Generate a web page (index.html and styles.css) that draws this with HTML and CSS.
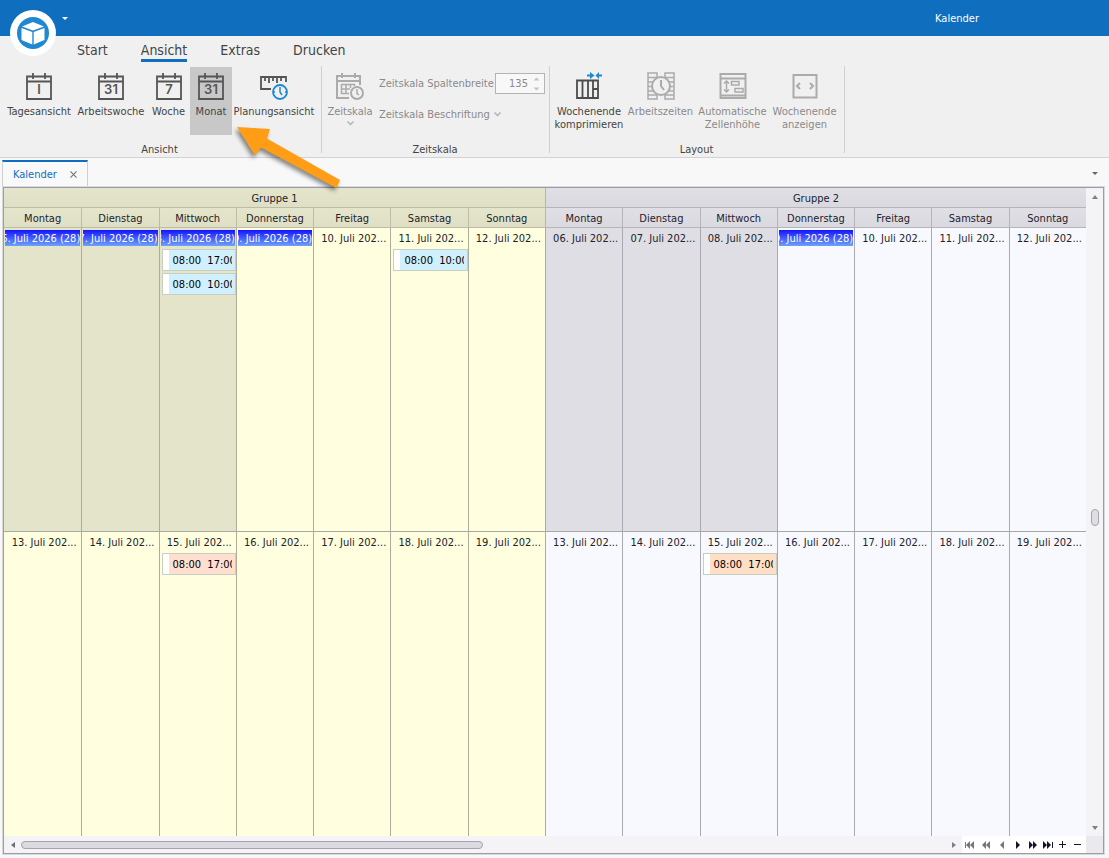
FILE: index.html
```html
<!DOCTYPE html>
<html lang="de">
<head>
<meta charset="utf-8">
<title>Kalender</title>
<link rel="stylesheet" href="styles.css">
</head>
<body>
<svg class="defs" aria-hidden="true">
  <symbol id="cal" viewBox="0 0 28 28"><path d="M2 4.500H26V27H2ZM2 9.500H26M8 1V7M20 1V7" fill="none" stroke="currentColor" stroke-width="1.800"/></symbol>
</svg>
<header class="titlebar">
  <button class="logo" aria-label="Anwendungsmenü">
    <svg width="46" height="46" viewBox="0 0 46 46"><circle cx="23" cy="23" r="23" fill="#fff"/><circle cx="23" cy="23" r="16" fill="#1e88d2"/><path d="M23 12L34 16.500L23 20.500L12 16.500ZM11.500 18L22.300 22V34.500L11.500 30ZM34.500 18L23.700 22V34.500L34.500 30Z" fill="#fff"/></svg>
  </button>
  <button class="quick" aria-label="Schnellzugriff anpassen"><svg width="6" height="3"><path d="M0 0H6L3 3Z" fill="#fff"/></svg></button>
  <span class="title">Kalender</span>
</header>
<nav class="tabs">
  <a href="#start">Start</a><a href="#ansicht" class="active">Ansicht</a><a href="#extras">Extras</a><a href="#drucken">Drucken</a>
</nav>
<section class="ribbon">
  <div class="group">
    <div class="tools views">
      <button class="tool"><svg width="28" height="28"><use href="#cal"/><text class="num" x="14" y="22">I</text></svg><span>Tagesansicht</span></button>
      <button class="tool"><svg width="28" height="28"><use href="#cal"/><text class="num" x="14" y="22">31</text></svg><span>Arbeitswoche</span></button>
      <button class="tool"><svg width="28" height="28"><use href="#cal"/><text class="num" x="14" y="22">7</text></svg><span>Woche</span></button>
      <button class="tool pressed"><svg width="28" height="28"><use href="#cal"/><text class="num" x="14" y="22">31</text></svg><span>Monat</span></button>
      <button class="tool"><svg width="28" height="28" viewBox="0 0 28 28" fill="none" stroke="#555" stroke-width="1.800"><path d="M11 17H1V5H26V10M5 5V9M9 5V11M13 5V9M17 5V11M21 5V9"/><circle cx="20" cy="20" r="7" stroke="#1e88d2"/><path d="M20 15V20L22 23M15 20H14M26 20H25" stroke="#1e88d2" stroke-width="1.500"/></svg><span>Planungsansicht</span></button>
    </div>
    <div class="caption">Ansicht</div>
  </div>
  <div class="group">
    <div class="tools scale">
      <button class="tool" disabled><svg width="28" height="28" viewBox="0 0 28 28" fill="none" stroke="#ababab" stroke-width="2"><path d="M13 26H1V4H24V13M1 9H24M6 1V6M19 1V6"/><path d="M13 21.500H5.500V12.500H18.500V14M5.500 17H14M10 12.500V21.500M14.500 12.500V16" stroke-width="1.500"/><circle cx="21" cy="21" r="6"/><path d="M21 17V21.500L23 23" stroke-width="1.500"/></svg><span>Zeitskala</span><svg class="chev" width="7" height="5" viewBox="0 0 7 5"><path d="M.5 .5L3.500 3.500L6.500 .5"/></svg></button>
      <div class="settings">
        <div class="field"><label for="breite">Zeitskala Spaltenbreite</label><span class="spin"><input id="breite" type="text" value="135" disabled><svg width="7" height="14" viewBox="0 0 7 14"><path d="M0.500 3.500L3.500 .5L6.500 3.500ZM.5 10.500L3.500 13.500L6.500 10.500Z" fill="#c4c4c4"/></svg></span></div>
        <button class="drop" disabled>Zeitskala Beschriftung <svg class="chev" width="7" height="5" viewBox="0 0 7 5"><path d="M.5 .5L3.500 3.500L6.500 .5"/></svg></button>
      </div>
    </div>
    <div class="caption">Zeitskala</div>
  </div>
  <div class="group">
    <div class="tools layout">
      <button class="tool"><svg width="28" height="28" viewBox="0 0 28 28" fill="none" stroke="#4c4c4c" stroke-width="1.800"><path d="M2 8.500H23V26H2ZM7.500 8V26M13 8V26M18 8V26M18 17H23"/><path d="M12 3.500H17M27 3.500H22" stroke="#1e88d2"/><path d="M15 0L19.500 3.500L15 7ZM24 0L20.500 3.500L24 7Z" fill="#1e88d2" stroke="none"/></svg><span>Wochenende<br>komprimieren</span></button>
      <button class="tool" disabled><svg width="28" height="28" viewBox="0 0 28 28" fill="none" stroke="#ababab" stroke-width="1.500"><path d="M1 1H10V27H1ZM18 1H27V27H18ZM1 5.500H10M1 10H10M1 14.500H10M1 19H10M1 23H10M18 5.500H27M18 10H27M18 14.500H27M18 19H27M18 23H27"/><circle cx="14" cy="14" r="9" fill="#f0f0f0" stroke-width="2"/><path d="M14 8V14L17 18" stroke-width="2"/></svg><span>Arbeitszeiten</span></button>
      <button class="tool" disabled><svg width="28" height="28" viewBox="0 0 28 28" fill="none" stroke="#ababab" stroke-width="2"><path d="M1.500 2H26.500V26H1.500ZM1.500 6.500H26.500M1.500 23.500H26.500"/><path d="M7.500 9V20M5 11.500L7.500 9L10 11.500M5 17.500L7.500 20L10 17.500M12.500 9.500H20V13H12.500ZM16 16.500H24V20H16Z" stroke-width="1.500"/></svg><span>Automatische<br>Zellenhöhe</span></button>
      <button class="tool" disabled><svg width="28" height="28" viewBox="0 0 28 28" fill="none" stroke="#ababab" stroke-width="2"><path d="M2.500 3H25.500V25.500H2.500Z"/><path d="M9 11L6 14L9 17M19 11L22 14L19 17"/></svg><span>Wochenende<br>anzeigen</span></button>
    </div>
    <div class="caption">Layout</div>
  </div>
</section>
<div class="doctabs">
  <div class="doctab"><a href="#kalender">Kalender</a><button aria-label="Schließen"><svg width="7" height="7" viewBox="0 0 8 8"><path d="M.5 .5L7.500 7.500M7.500 .5L.5 7.500" stroke="#777" stroke-width="1.300"/></svg></button></div>
  <button class="doclist" aria-label="Fensterliste"><svg width="6" height="3"><path d="M0 0H6L3 3Z" fill="#666"/></svg></button>
</div>
<main class="frame">
  <table class="month">
    <thead>
      <tr><th colspan="7" class="g1">Gruppe 1</th><th colspan="7" class="g2">Gruppe 2</th></tr>
      <tr class="days"><th class="g1">Montag</th><th class="g1">Dienstag</th><th class="g1">Mittwoch</th><th class="g1">Donnerstag</th><th class="g1">Freitag</th><th class="g1">Samstag</th><th class="g1">Sonntag</th><th class="g2">Montag</th><th class="g2">Dienstag</th><th class="g2">Mittwoch</th><th class="g2">Donnerstag</th><th class="g2">Freitag</th><th class="g2">Samstag</th><th class="g2">Sonntag</th></tr>
    </thead>
    <tbody>
      <tr class="first">
        <td class="y past"><div class="date sel"><span>06. Juli 2026 (28)</span></div></td>
        <td class="y past"><div class="date sel"><span>07. Juli 2026 (28)</span></div></td>
        <td class="y past"><div class="date sel"><span>08. Juli 2026 (28)</span></div><div class="event blue"><span>08:00&nbsp; 17:00</span></div><div class="event blue"><span>08:00&nbsp; 10:00</span></div></td>
        <td class="y"><div class="date sel"><span>09. Juli 2026 (28)</span></div></td>
        <td class="y"><div class="date">10. Juli 202...</div></td>
        <td class="y"><div class="date">11. Juli 202...</div><div class="event blue"><span>08:00&nbsp; 10:00</span></div></td>
        <td class="y"><div class="date">12. Juli 202...</div></td>
        <td class="b past"><div class="date">06. Juli 202...</div></td>
        <td class="b past"><div class="date">07. Juli 202...</div></td>
        <td class="b past"><div class="date">08. Juli 202...</div></td>
        <td class="b"><div class="date sel"><span>09. Juli 2026 (28)</span></div></td>
        <td class="b"><div class="date">10. Juli 202...</div></td>
        <td class="b"><div class="date">11. Juli 202...</div></td>
        <td class="b"><div class="date">12. Juli 202...</div></td>
      </tr>
      <tr>
        <td class="y"><div class="date">13. Juli 202...</div></td>
        <td class="y"><div class="date">14. Juli 202...</div></td>
        <td class="y"><div class="date">15. Juli 202...</div><div class="event red"><span>08:00&nbsp; 17:00</span></div></td>
        <td class="y"><div class="date">16. Juli 202...</div></td>
        <td class="y"><div class="date">17. Juli 202...</div></td>
        <td class="y"><div class="date">18. Juli 202...</div></td>
        <td class="y"><div class="date">19. Juli 202...</div></td>
        <td class="b"><div class="date">13. Juli 202...</div></td>
        <td class="b"><div class="date">14. Juli 202...</div></td>
        <td class="b"><div class="date">15. Juli 202...</div><div class="event orange"><span>08:00&nbsp; 17:00</span></div></td>
        <td class="b"><div class="date">16. Juli 202...</div></td>
        <td class="b"><div class="date">17. Juli 202...</div></td>
        <td class="b"><div class="date">18. Juli 202...</div></td>
        <td class="b"><div class="date">19. Juli 202...</div></td>
      </tr>
    </tbody>
  </table>
  <div class="vscroll">
    <button aria-label="Nach oben"><svg width="6" height="4"><path d="M0 4H6L3 0Z" fill="#7d7e8c"/></svg></button>
    <div class="vtrack"><div class="vthumb"></div></div>
    <button aria-label="Nach unten"><svg width="6" height="4"><path d="M0 0H6L3 4Z" fill="#7d7e8c"/></svg></button>
  </div>
  <div class="hscroll">
    <button class="end" aria-label="Nach links"><svg width="4" height="6"><path d="M4 0V6L0 3Z" fill="#6d6e7c"/></svg></button>
    <div class="htrack"><div class="hthumb"></div></div>
    <button class="end" aria-label="Nach rechts"><svg width="4" height="6"><path d="M0 0V6L4 3Z" fill="#7d7e8c"/></svg></button>
    <div class="navigator">
      <button class="dim" aria-label="Erster"><svg width="10" height="8"><path d="M0 1H1V7H0ZM5 0V8L1 4ZM9 0V8L5 4Z"/></svg></button>
      <button class="dim" aria-label="Vorherige Seite"><svg width="8" height="8"><path d="M4 0V8L0 4ZM8 0V8L4 4Z"/></svg></button>
      <button class="dim" aria-label="Zurück"><svg width="4" height="8"><path d="M4 0V8L0 4Z"/></svg></button>
      <button aria-label="Weiter"><svg width="4" height="8"><path d="M0 0V8L4 4Z"/></svg></button>
      <button aria-label="Nächste Seite"><svg width="8" height="8"><path d="M0 0V8L4 4ZM4 0V8L8 4Z"/></svg></button>
      <button aria-label="Letzter"><svg width="10" height="8"><path d="M0 0V8L4 4ZM4 0V8L8 4ZM9 1H10V7H9Z"/></svg></button>
      <button aria-label="Vergrößern"><svg width="7" height="7"><path d="M3 0H4V3H7V4H4V7H3V4H0V3H3Z"/></svg></button>
      <button aria-label="Verkleinern"><svg width="7" height="7"><path d="M0 3H7V4H0Z"/></svg></button>
    </div>
  </div>
  <div class="corner"></div>
</main>
<svg class="pointer" width="116" height="80" viewBox="0 0 116 80" aria-hidden="true"><path d="M2 2L35 4L32 13.500L105 55L101.500 63L26 22.500L20 30.500Z" fill="#ff9e16"/></svg>
</body>
</html>
```
FILE: styles.css
```css
* { box-sizing: border-box; }
html, body { height: 100%; }
body {
  margin: 0;
  display: flex;
  flex-direction: column;
  min-height: 500px;
  background: #f8f8f8;
  color: #444;
  font: 11px/13px "DejaVu Sans Condensed", "DejaVu Sans", sans-serif;
  font-stretch: condensed;
  overflow: hidden;
}
button { font: inherit; color: inherit; background: none; border: 0; padding: 0; }
svg { display: block; overflow: visible; }
a { color: inherit; text-decoration: none; }
.defs { position: absolute; width: 0; height: 0; }

.titlebar { position: relative; display: flex; align-items: center; height: 36px; padding: 0 130px 0 62px; background: #106ebe; color: #fff; flex: none; }
.logo { position: absolute; left: 10px; top: 10px; }
.title { margin-left: auto; }

.tabs { display: flex; gap: 33px; height: 30px; padding: 5px 0 0 77px; background: #f0f0f0; font-size: 14px; line-height: 19px; flex: none; }
.tabs a { height: 21px; }
.tabs .active { border-bottom: 3px solid #106ebe; }

.ribbon { display: flex; height: 92px; background: #f0f0f0; border-bottom: 1px solid #d2d2d2; flex: none; }
.group { display: flex; flex-direction: column; height: 87px; border-right: 1px solid #d0d0d0; padding: 1px 4px 0 3px; }
.group:first-child { padding-right: 5px; }
.tools { display: grid; height: 68px; flex: none; }
.views { grid-template-columns: 72px 72px 43px 42px 84px; }
.scale { grid-template-columns: 50px 170px; }
.layout { grid-template-columns: 72px 71px 73px 71px; }
.tool { display: flex; flex-direction: column; align-items: center; justify-content: flex-start; gap: 5px; padding-top: 5px; white-space: nowrap; }
.tool:disabled, .drop:disabled, .field { color: #8a8a8a; }
.tool .chev { margin-top: -2px; }
.pressed { background: #c8c8c8; }
.num { font: 600 13px Inter, sans-serif; text-anchor: middle; fill: #555; }
.tool use { color: #555; }
.chev { fill: none; stroke: #b4b4b4; stroke-width: 1.500; }
.settings { display: flex; flex-direction: column; gap: 14px; padding: 6px 0 0 4px; }
.field { display: flex; align-items: center; justify-content: space-between; height: 21px; white-space: nowrap; }
.spin { display: flex; align-items: center; flex: none; width: 50px; height: 21px; padding-right: 4px; background: #f8f8f8; border: 1px solid #b4b4b4; }
.spin input { flex: 1; min-width: 0; padding: 0 0 0 8px; border: 0; background: none; font: inherit; color: #8a8a8a; text-align: center; }
.drop { display: flex; align-items: center; gap: 4px; white-space: nowrap; }
.caption { padding-top: 8px; text-align: center; }

.doctabs { display: flex; justify-content: space-between; height: 29px; padding: 2px 11px 0 2px; flex: none; }
.doctab { display: flex; align-items: center; gap: 13px; padding: 0 10px; border: 1px solid #d0d0d0; border-top: 2px solid #106ebe; border-bottom: 0; color: #106ebe; background: #f9f9f9; }

.frame { flex: 1; min-height: 0; display: grid; grid-template: minmax(0, 1fr) 17px / minmax(0, 1fr) 17px; margin: 0 5px 4px 3px; border: 1px solid #9c9ca6; box-shadow: 0 0 0 1px #d9d9dd; }
.month { width: 100%; height: 100%; table-layout: fixed; border-collapse: separate; border-spacing: 0; color: #22222a; }
.month th { height: 20px; padding: 1px 0 0; font-weight: normal; border-bottom: 1px solid #b9b9bf; }
.month th.g1 { background: linear-gradient(#e5e5cc, #dfdfc6); border-color: #bdbda6; }
.month th.g2 { background: linear-gradient(#e0dfe6, #dad9e0); border-color: #b4b4bc; }
.month th + th, .month td + td { border-left: 1px solid #a9a9b3; }
.month .days th + th.g1 { border-left-color: #bdbda6; }
.month td { height: 50%; padding: 2px 0 0 1px; vertical-align: top; }
.month td.y { background: #ffffe0; }
.month td.y + td.y { border-left-color: #adad98; }
.month td.y.past { background: #e4e4ca; }
.month td.b { background: #f8f9ff; }
.month td.b.past { background: #dfdee5; }
.first td { border-bottom: 1px solid #a9a9a4; }
.date { height: 16px; padding: 1px 0 0 2px; line-height: 15px; text-align: center; white-space: nowrap; overflow: hidden; }
.sel { display: flex; justify-content: flex-end; margin-right: 1px; background: linear-gradient(#1414ff, #6ea2fa); color: #fff; padding: 1px 0 0; }
.event { display: flex; height: 22px; margin: 2px 0 0 1px; padding-right: 3px; border: 1px solid #c9cfc0; color: #000; line-height: 21px; white-space: nowrap; }
.event::before { content: ""; width: 6px; flex: none; background: #fff; }
.event span { flex: 1; min-width: 0; overflow: hidden; padding-left: 4px; }
.date + .event { margin-top: 3px; }
.blue { background: #d0f0fd; }
.red { background: #ffdfd0; }
.orange { background: #ffdfc6; }

.vscroll { display: flex; flex-direction: column; align-items: center; background: #f4f4f7; }
.vscroll button { height: 17px; }
.vtrack { flex: 1; padding-top: 304px; }
.vthumb { width: 8px; height: 17px; border: 1px solid #a4a4ae; border-radius: 4px; background: #dedee3; }
.hscroll { display: flex; align-items: center; background: #f4f4f7; }
.end { display: flex; justify-content: center; width: 17px; }
.htrack { flex: 1; }
.hthumb { width: 50%; height: 8px; border: 1px solid #a4a4ae; border-radius: 4px; background: #dadae0; }
.navigator { display: flex; align-items: center; height: 17px; padding-right: 1px; background: #fff; fill: #15152a; }
.navigator button { display: flex; justify-content: center; width: 15px; }
.navigator .dim { fill: #777; width: 16px; }
.corner { background: #e9e9ee; }

.pointer { position: absolute; left: 235px; top: 125px; pointer-events: none; filter: drop-shadow(-2px 3px 2px rgba(0, 0, 0, .45)); }
```
